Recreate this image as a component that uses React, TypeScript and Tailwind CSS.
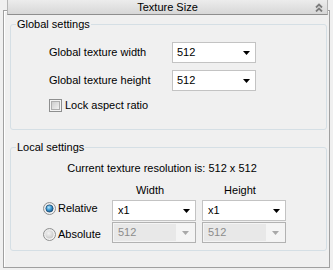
import React from 'react'

const Arrow = ({ color = '#000' }: { color?: string }) => (
  <svg width="7" height="4" viewBox="0 0 7 4">
    <path d="M0 0 H7 L3.5 4 Z" fill={color} />
  </svg>
)

const Combo = ({ value, w, pl = 'pl-[4px]', disabled }: { value: string; w: string; pl?: string; disabled?: boolean }) =>
  disabled ? (
    <div className={`flex h-[21px] ${w} border border-[#b2b2b2] bg-[#f4f4f4] p-[1px]`}>
      <div className={`flex-1 bg-[#e8e8e8] ${pl} leading-[17px] text-[#8c8c8c]`}>{value}</div>
      <div className="flex w-[18px] items-center justify-center pl-[1px]">
        <Arrow color="#a8a8a8" />
      </div>
    </div>
  ) : (
    <div className={`flex h-[21px] ${w} items-center border border-[#c3c3c3] bg-white`}>
      <div className={`flex-1 ${pl} leading-[19px] text-black`}>{value}</div>
      <div className="flex w-[18px] items-center justify-center pl-[1px]">
        <Arrow />
      </div>
    </div>
  )

const Radio = ({ checked }: { checked?: boolean }) => (
  <svg width="13" height="13" viewBox="0 0 13 13">
    <defs>
      <linearGradient id="rbg" x1="0" y1="0" x2="1" y2="1">
        <stop offset="0" stopColor="#e6e6e6" />
        <stop offset="1" stopColor="#f8f8f8" />
      </linearGradient>
      <radialGradient id="rdot" cx="0.4" cy="0.35" r="0.7">
        <stop offset="0" stopColor="#b8e6fb" />
        <stop offset="0.5" stopColor="#3d9ad3" />
        <stop offset="1" stopColor="#0f4f83" />
      </radialGradient>
      <radialGradient id="roff" cx="0.4" cy="0.35" r="0.7">
        <stop offset="0" stopColor="#f4f4f4" />
        <stop offset="1" stopColor="#c8c8c8" />
      </radialGradient>
    </defs>
    <circle cx="6.5" cy="6.5" r="6" fill="url(#rbg)" stroke="#8e8f8f" />
    {checked ? (
      <circle cx="6.5" cy="6.5" r="3.6" fill="url(#rdot)" stroke="#1a4a73" strokeWidth="0.8" />
    ) : (
      <circle cx="6.5" cy="6.5" r="4" fill="url(#roff)" />
    )}
  </svg>
)

const Check = () => (
  <svg width="13" height="13" viewBox="0 0 13 13">
    <defs>
      <linearGradient id="cbg" x1="0" y1="0" x2="1" y2="1">
        <stop offset="0" stopColor="#cbcbcb" />
        <stop offset="1" stopColor="#f4f4f4" />
      </linearGradient>
    </defs>
    <rect x="0.5" y="0.5" width="12" height="12" fill="#f4f4f4" stroke="#8e8f8f" />
    <rect x="2.5" y="2.5" width="8" height="8" fill="url(#cbg)" stroke="#aeaeae" />
  </svg>
)

export default function App() {
  return (
    <div className="h-[270px] w-[333px] overflow-hidden bg-[#f0f0f0] pt-[10px] pl-[3px] font-['Liberation_Sans',Arial,sans-serif] text-[11px] leading-[13px] text-black">
      <div className="flex h-[258px] w-[327px] flex-col border border-[#a0a0a0] shadow-[inset_1px_1px_0_#ffffff]">
        {/* rollout header */}
        <div className="relative -mt-[11px] ml-[3px] mr-[1px] flex h-[15px] items-center justify-center border-x border-b border-x-[#b4b4b4] border-b-[#8e8e8e] bg-gradient-to-b from-[#ececec] to-[#d7d7d7]">
          <span className="leading-[13px]">Texture Size</span>
          <svg className="absolute right-[4px] top-[3px]" width="8" height="9" viewBox="0 0 8 9">
            <path d="M1 4.5 L4 1.5 L7 4.5 M1 8.5 L4 5.5 L7 8.5" fill="none" stroke="#7c7c7c" strokeWidth="1.8" />
          </svg>
        </div>

        {/* Global settings */}
        <fieldset className="ml-[6px] mt-[3px] w-[317px] rounded-[3px] border border-[#d5dfe5] pb-[17px]">
          <legend className="ml-[5px] px-[1px] leading-[13px]">Global settings</legend>
          <div className="mt-[11px] flex flex-col gap-[7px] pl-[38px]">
            <div className="flex items-center">
              <span className="w-[123px]">Global texture width</span>
              <Combo value="512" w="w-[84px]" />
            </div>
            <div className="flex items-center">
              <span className="w-[123px]">Global texture height</span>
              <Combo value="512" w="w-[84px]" />
            </div>
            <div className="mt-[1px] flex h-[13px] items-center gap-[3px]">
              <Check />
              <span>Lock aspect ratio</span>
            </div>
          </div>
        </fieldset>

        {/* Local settings */}
        <fieldset className="ml-[6px] mt-[11px] w-[317px] rounded-[3px] border border-[#d5dfe5] pb-[7px]">
          <legend className="ml-[5px] px-[1px] leading-[13px]">Local settings</legend>
          <div className="mt-[8px] pr-[13px] text-center">Current texture resolution is: 512 x 512</div>
          <div className="mt-[9px] flex pl-[101px]">
            <div className="w-[84px] pr-[8px] text-center">Width</div>
            <div className="ml-[6px] w-[84px] pr-[8px] text-center">Height</div>
          </div>
          <div className="mt-[3px] flex pl-[32px]">
            <div className="flex w-[69px] flex-col gap-[13px] pt-[2px]">
              <div className="flex h-[13px] items-center gap-[2px]">
                <Radio checked />
                <span>Relative</span>
              </div>
              <div className="flex h-[13px] items-center gap-[2px]">
                <Radio />
                <span>Absolute</span>
              </div>
            </div>
            <div className="flex flex-col gap-[1px]">
              <div className="flex gap-[6px]">
                <Combo value="x1" w="w-[84px]" pl="pl-[5px]" />
                <Combo value="x1" w="w-[84px]" pl="pl-[5px]" />
              </div>
              <div className="flex gap-[6px]">
                <Combo value="512" w="w-[84px]" pl="pl-[4px]" disabled />
                <Combo value="512" w="w-[84px]" pl="pl-[4px]" disabled />
              </div>
            </div>
          </div>
        </fieldset>
      </div>
    </div>
  )
}
